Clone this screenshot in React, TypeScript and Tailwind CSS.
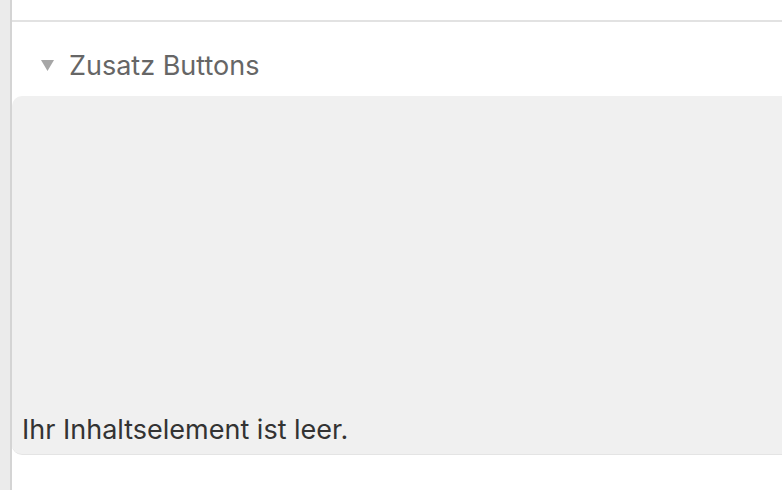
import React from 'react';

export default function App() {
  return (
    <div className="flex h-[490px] w-[782px] overflow-hidden bg-white font-['Inter',sans-serif]">
      <div className="w-[10px] shrink-0 bg-[#ebebeb]" />
      <div className="w-[2px] shrink-0 bg-[#d4d4d4]" />
      <div className="flex min-w-0 flex-1 flex-col">
        <div className="h-[22px] shrink-0 border-b-2 border-[#e2e2e2]" />
        <div className="flex h-[74px] shrink-0 items-center gap-[15px] pl-[29px] pt-[12px]">
          <svg width="13" height="11" viewBox="0 0 13 11" className="mt-[1px]">
            <polygon points="0,0 13,0 6.5,11" fill="#a6a6a6" />
          </svg>
          <span className="text-[27px] leading-none text-[#666666]">Zusatz Buttons</span>
        </div>
        <div className="flex h-[359px] shrink-0 flex-col justify-end rounded-l-[10px] border-b border-[#e4e4e4] bg-[#f0f0f0] px-[10px] pb-[6px]">
          <p className="text-[27px] leading-[36px] text-[#333333]">Ihr Inhaltselement ist leer.</p>
        </div>
      </div>
    </div>
  );
}
